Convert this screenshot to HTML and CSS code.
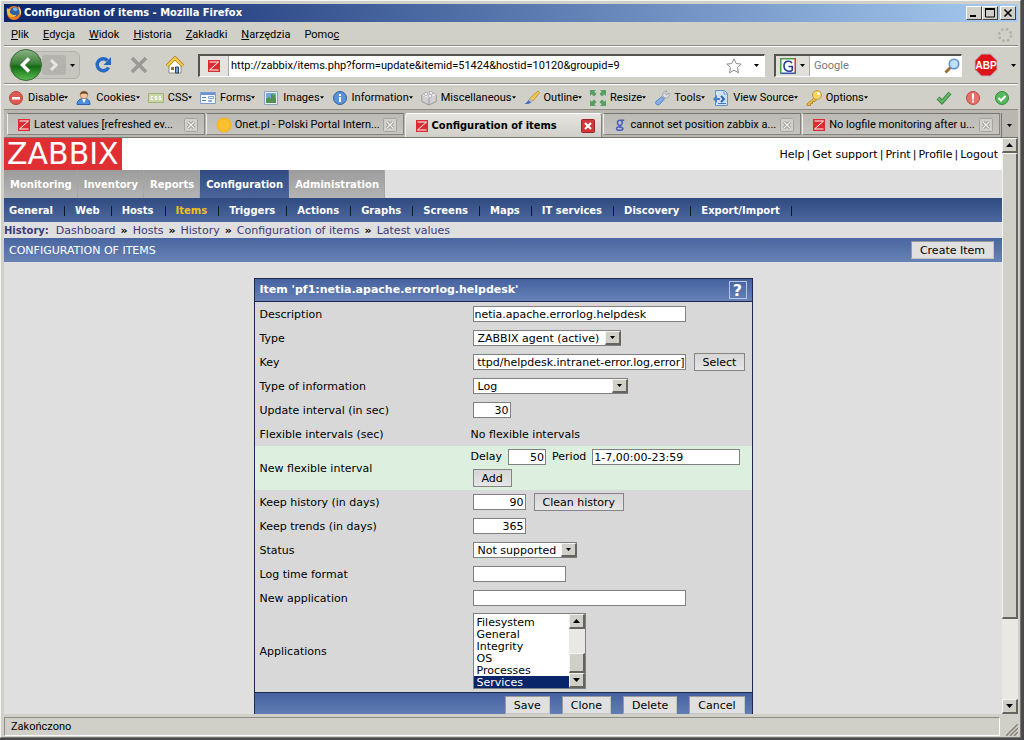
FILE: index.html
```
<!DOCTYPE html>
<html lang="pl">
<head>
<meta charset="utf-8">
<title>Configuration of items - Mozilla Firefox</title>
<link rel="stylesheet" href="styles.css">
</head>
<body>
<svg class="defs" aria-hidden="true">
  <symbol id="z" viewBox="0 0 12 12"><rect width="12" height="12" fill="#dc2b31"/><path d="M1.5 2h9L1.5 10h9" fill="none" stroke="#fff" stroke-width="1"/></symbol>
  <symbol id="x" viewBox="0 0 14 14"><rect x=".5" y=".5" width="13" height="13" rx="1" fill="#d2d0ca" stroke="#a5a39d"/><path d="M4 4l6 6M10 4l-6 6" stroke="#908e88" stroke-width="3"/><path d="M4 4l6 6M10 4l-6 6" stroke="#f4f4f2" stroke-width="1.4"/></symbol>
  <symbol id="down" viewBox="0 0 7 4"><path d="M0 0h7L3.500 4z"/></symbol>
  <symbol id="up" viewBox="0 0 7 4"><path d="M0 4h7L3.500 0z"/></symbol>
</svg>
<div class="desktop">
<div class="window">
  <header class="titlebar">
    <svg class="i16" viewBox="0 0 16 16"><circle cx="8" cy="8" r="7" fill="#ee7a1c"/><circle cx="8.500" cy="7" r="4.800" fill="#2c5fb0"/><path d="M7 3c2-1 4 0 5 2-1 0-2 1-3 1s-2-1-2-3z" fill="#7fb6e8"/><path d="M1 3c1 1 2 1 4 1L3.500 6.500c1 3 4 4.500 7 3C9 13 4 13 2 10 .8 8 .5 5 1 3z" fill="#f9b83a"/><path d="M12 1c3 2 4 6 2.500 9.500C14 7 13 4 12 1z" fill="#ffd24a"/></svg>
    <h1>Configuration of items - Mozilla Firefox</h1>
    <div class="winbtns">
      <button aria-label="Minimize"><svg viewBox="0 0 12 10"><path d="M2 7h6v2H2z"/></svg></button>
      <button aria-label="Maximize"><svg viewBox="0 0 12 10"><path d="M1.500 1.500h9v7.500h-9zM1 1.500h10" fill="none" stroke="#000"/><path d="M1 0h10v2H1z"/></svg></button>
      <button class="close" aria-label="Close"><svg viewBox="0 0 12 10"><path d="M2.500 1.500l7 7M9.500 1.500l-7 7" stroke="#000" stroke-width="1.600"/></svg></button>
    </div>
  </header>
  <nav class="menubar">
    <button><u>P</u>lik</button><button><u>E</u>dycja</button><button><u>W</u>idok</button><button><u>H</u>istoria</button><button><u>Z</u>akładki</button><button><u>N</u>arzędzia</button><button>Pomo<u>c</u></button>
    <svg class="throbber" viewBox="0 0 16 16"><circle cx="8" cy="8" r="6" fill="none" stroke="#b4b2ab" stroke-width="2.500" stroke-dasharray="2.600 2.110"/></svg>
  </nav>
  <div class="navbar">
    <div class="backfwd">
      <button class="back" aria-label="Back"><svg viewBox="0 0 32 32"><defs><linearGradient id="g" x2="0" y2="1"><stop stop-color="#8cb487"/><stop offset=".45" stop-color="#3c8037"/><stop offset=".55" stop-color="#146c14"/><stop offset="1" stop-color="#5bbd50"/></linearGradient></defs><circle cx="16" cy="16" r="15.500" fill="url(#g)" stroke="#3b6b3a"/><path d="M19 9.500L12.500 16l6.500 6.500" fill="none" stroke="#fff" stroke-width="3.500"/></svg></button>
      <button class="fwd" aria-label="Forward"><svg viewBox="0 0 24 20"><path d="M9 5l5 5-5 5" fill="none" stroke="#e6e6e2" stroke-width="3"/></svg></button>
      <button aria-label="Recent pages"><svg class="arr s"><use href="#down"/></svg></button>
    </div>
    <button aria-label="Reload"><svg class="i18" viewBox="0 0 18 18"><path d="M13.500 4.500A6 6 0 1 0 14.500 11.500" fill="none" stroke="#2467c4" stroke-width="3.400"/><path d="M17 1v8H9.500z" fill="#2467c4"/></svg></button>
    <button aria-label="Stop"><svg class="i18" viewBox="0 0 18 18"><path d="M2 2l14 14M16 2L2 16" stroke="#9a9993" stroke-width="3.600"/></svg></button>
    <button aria-label="Home"><svg class="i18" viewBox="0 0 18 18"><path d="M3 8v9h12V8L9 3z" fill="#fff" stroke="#8b8b8b"/><path d="M1 10L9 2l8 8" fill="none" stroke="#a87a12" stroke-width="3.400"/><path d="M1 10L9 2l8 8" fill="none" stroke="#f7cd4b" stroke-width="2.200"/><path d="M9.500 11h3v6h-3z" fill="#6fa0d8" stroke="#345"/><path d="M5 11h3v3H5z" fill="#9c6a3c"/></svg></button>
    <div class="urlbox">
      <span class="favbox"><svg class="i12"><use href="#z"/></svg></span>
      <input aria-label="Address" value="http://zabbix/items.php?form=update&amp;itemid=51424&amp;hostid=10120&amp;groupid=9">
      <svg class="i16" viewBox="0 0 16 16"><path d="M8 .8l2.200 4.700 5 .6-3.700 3.500 1 5.200L8 12.200l-4.500 2.600 1-5.200L.8 6.100l5-.6z" fill="#fff" stroke="#8a8a8a"/></svg>
      <button aria-label="History list"><svg class="arr s"><use href="#down"/></svg></button>
    </div>
    <div class="search">
      <button class="engine" aria-label="Search engine"><svg class="i16" viewBox="0 0 16 16"><path fill="#fff" d="M0 0h16v16H0z"/><path d="M.75 16V.75H15" fill="none" stroke="#4b9b4b" stroke-width="1.500"/><path d="M15.250 0v16" stroke="#d4343a" stroke-width="1.500"/><path d="M1 15.250h14" stroke="#3358b4" stroke-width="1.500"/><path d="M12 5C10.500 2.500 4 2 4 8s7 6 8.300 4V8.500H8.500" fill="none" stroke="#203f93" stroke-width="1.600"/></svg><svg class="arr s"><use href="#down"/></svg></button>
      <input aria-label="Search" placeholder="Google">
      <svg class="i16" viewBox="0 0 16 16"><path d="M1.500 14.500l5-5" stroke="#a36c35" stroke-width="3"/><circle cx="10" cy="6" r="4.700" fill="#bfe0fa" stroke="#5b93cf" stroke-width="1.600"/></svg>
    </div>
    <button class="abp" aria-label="Adblock Plus"><svg viewBox="0 0 24 24"><path d="M7.500 1h9L23 7.500v9L16.500 23h-9L1 16.500v-9z" fill="#e0131c" stroke="#b9b9b9"/><text x="12" y="16" text-anchor="middle">ABP</text></svg></button>
    <button class="more" aria-label="More"><svg class="arr s"><use href="#down"/></svg></button>
  </div>
  <div class="devbar">
    <button><svg class="i16" viewBox="0 0 16 16"><circle cx="8" cy="8" r="6.500" fill="#dd5a52" stroke="#b9403b"/><path d="M4 7h8v2.500H4z" fill="#fff"/></svg>Disable<svg class="arr t"><use href="#down"/></svg></button>
    <button><svg class="i16" viewBox="0 0 16 16"><path d="M1 14.500c0-4 3-6 7-6s6 2 6 6z" fill="#4c8fe0" stroke="#2b62ad"/><path d="M6 9l2 4 2-4z" fill="#fff"/><circle cx="8" cy="5" r="3.800" fill="#f2c49b" stroke="#9b6a3c" stroke-width=".6"/><path d="M4 5C4 0 12 0 12 5c-2-2-6-2-8 0z" fill="#6d4526"/></svg>Cookies<svg class="arr t"><use href="#down"/></svg></button>
    <button><svg class="i16" viewBox="0 0 16 16"><path d="M.5 3.500h15v9H.5z" fill="#c9d6a8" stroke="#a4b37c"/><path d="M5 6.500H3v3h2M9 6.500H7V8h2v1.500H7M13 6.500h-2V8h2v1.500h-2" fill="none" stroke="#fff"/></svg>CSS<svg class="arr t"><use href="#down"/></svg></button>
    <button><svg class="i16" viewBox="0 0 16 16"><path d="M.5 2.500h15v11H.5z" fill="#f7faff" stroke="#7c9cc9"/><path d="M1 3h14v2H1z" fill="#6793d6"/><path d="M2 7.500h4M2 10.500h4" stroke="#5579b3"/><path d="M8.500 6.500h5v2h-5zM8.500 10.500h3v1h-3z" fill="none" stroke="#88a6d1"/></svg>Forms<svg class="arr t"><use href="#down"/></svg></button>
    <button><svg class="i16" viewBox="0 0 16 16"><path d="M1.500 1.500h13v13h-13z" fill="#e8f0f8" stroke="#8da3bd"/><path d="M3 3h10v10H3z" fill="#74a8dd"/><path d="M3 13V9l3-2 2 2V4l4 1 1 5v3z" fill="#4b9350"/></svg>Images<svg class="arr t"><use href="#down"/></svg></button>
    <button><svg class="i16" viewBox="0 0 16 16"><circle cx="8" cy="8" r="6.500" fill="#5b92d6" stroke="#2f62a6"/><path d="M7 7h2v5H7zM7 4h2v2H7z" fill="#fff"/></svg>Information<svg class="arr t"><use href="#down"/></svg></button>
    <button><svg class="i16" viewBox="0 0 16 16"><path d="M.8 5L8 2l7.200 3v6.500L8 15 .8 11.500z" fill="#d0d0d2" stroke="#9a9a9c"/><path d="M1 5l7 3 7-3-7-3z" fill="#f2f2f2"/><path d="M8 8v7" stroke="#9a9a9c"/><ellipse cx="5" cy="4" rx="2" ry="1.400" fill="#fff" stroke="#aaa"/><ellipse cx="10" cy="3" rx="2" ry="1.400" fill="#fff" stroke="#aaa"/><ellipse cx="9" cy="6" rx="2" ry="1.400" fill="#fff" stroke="#aaa"/></svg>Miscellaneous<svg class="arr t"><use href="#down"/></svg></button>
    <button><svg class="i16" viewBox="0 0 16 16"><path d="M14 1l1.500 1.500L9 11 5.500 8.500z" fill="#f2c94e" stroke="#ac8125" stroke-width=".7"/><path d="M6 8l3 3-2 2-3-3z" fill="#b9b9bd"/><path d="M4.500 10l2.500 2.500C5 14.500 2.500 14 0 14c2-.5 3-2 4.500-4z" fill="#446fba"/></svg>Outline<svg class="arr t"><use href="#down"/></svg></button>
    <button><svg class="i16" viewBox="0 0 16 16"><path d="M0 0h6L4.300 1.700 6.500 4 4 6.500 1.700 4.300 0 6zM16 0h-6l1.700 1.700L9.500 4 12 6.500l2.300-2.200L16 6zM0 16h6l-1.700-1.700L6.500 12 4 9.500l-2.300 2.200L0 10zM16 16h-6l1.700-1.700L9.500 12 12 9.500l2.300 2.200L16 10z" fill="#579e5f"/></svg>Resize<svg class="arr t"><use href="#down"/></svg></button>
    <button><svg class="i16" viewBox="0 0 16 16"><path d="M9 6c-1-3 1-5 4-5l-2 2.500 1.500 1.500L15 3c1 3-1 5.500-4 5z" fill="#dcdfe3" stroke="#8b929b" stroke-width=".7"/><path d="M8 6.500l2.500 2.500-5 5.500c-2 1.500-5-1-3.500-3z" fill="#83aee8" stroke="#4a77b7" stroke-width=".8"/></svg>Tools<svg class="arr t"><use href="#down"/></svg></button>
    <button><svg class="i16" viewBox="0 0 16 16"><path d="M2.500.5h9l3 3v12h-12z" fill="#cfe2fa" stroke="#5f91d3"/><path d="M11 1v3h3" fill="#fff" stroke="#5f91d3"/><path d="M0 9l4-4v3h3v2H4v3z" fill="#4780cd"/><path d="M8 6l3 3-3 3" fill="none" stroke="#2f67b6" stroke-width="2"/><path d="M5 13.500h8" stroke="#3f78c5"/></svg>View Source<svg class="arr t"><use href="#down"/></svg></button>
    <button><svg class="i16" viewBox="0 0 16 16"><path d="M8 8l-7 6v1.500h3.500v-2h2v-2H9l1.500-2z" fill="#edbd41" stroke="#ad7e1f" stroke-width=".8"/><circle cx="11" cy="5" r="4.500" fill="#f7d467" stroke="#b98a25" stroke-width=".8"/><circle cx="12.500" cy="3.500" r="1.300" fill="#fff"/></svg>Options<svg class="arr t"><use href="#down"/></svg></button>
    <span class="status-icons">
      <svg class="i16" viewBox="0 0 16 16"><path d="M2 8l4 4 8-9" fill="none" stroke="#37873f" stroke-width="4"/><path d="M2 8l4 4 8-9" fill="none" stroke="#67b56b" stroke-width="2.200"/></svg>
      <svg class="i16" viewBox="0 0 16 16"><circle cx="8" cy="8" r="6.500" fill="#e4716b" stroke="#c04640"/><path d="M7 3.500h2v6H7zM7 10.500h2v2H7z" fill="#fff"/></svg>
      <svg class="i16" viewBox="0 0 16 16"><circle cx="8" cy="8" r="6.500" fill="#58b65f" stroke="#328c3a"/><path d="M4.500 8l2.500 2.500 4.500-4.500" fill="none" stroke="#fff" stroke-width="2"/></svg>
    </span>
  </div>
  <div class="tabs">
    <div class="tab"><svg class="i12"><use href="#z"/></svg><span>Latest values [refreshed ev...</span><button aria-label="Close tab"><svg class="i14"><use href="#x"/></svg></button></div>
    <div class="tab"><svg class="i16" viewBox="0 0 16 16"><circle cx="8" cy="8" r="7.500" fill="#f5b523"/><circle cx="8" cy="8" r="6" fill="#fbc02d"/></svg><span>Onet.pl - Polski Portal Intern...</span><button aria-label="Close tab"><svg class="i14"><use href="#x"/></svg></button></div>
    <div class="tab active"><svg class="i12"><use href="#z"/></svg><span>Configuration of items</span><button aria-label="Close tab"><svg class="i14" viewBox="0 0 14 14"><rect x=".5" y=".5" width="13" height="13" rx="1" fill="#d1383c" stroke="#9b2226"/><path d="M4 4l6 6M10 4l-6 6" stroke="#fff" stroke-width="2"/></svg></button></div>
    <div class="tab"><svg class="i12" viewBox="0 0 12 14"><path d="M11 1.500H7.500C10 5 8 7.500 5.500 7.500S1.500 2 5.500 1.500h3M5.500 8c0 2 4 1 4 3.300S2 14 2 11.300 6 9.500 6.500 9.500" fill="none" stroke="#4a5fc0" stroke-width="1.800"/></svg><span>cannot set position zabbix a...</span><button aria-label="Close tab"><svg class="i14"><use href="#x"/></svg></button></div>
    <div class="tab"><svg class="i12"><use href="#z"/></svg><span>No logfile monitoring after u...</span><button aria-label="Close tab"><svg class="i14"><use href="#x"/></svg></button></div>
    <button class="alltabs" aria-label="All tabs"><svg class="arr s"><use href="#down"/></svg></button>
  </div>

  <div class="viewport">
    <main class="page">
      <div class="brand"><span class="logo">ZABBIX</span>
        <p class="toplinks"><a href="#">Help</a>|<a href="#">Get support</a>|<a href="#">Print</a>|<a href="#">Profile</a>|<a href="#">Logout</a></p></div>
      <nav class="main"><a href="#">Monitoring</a><a href="#">Inventory</a><a href="#">Reports</a><a href="#" class="on">Configuration</a><a href="#">Administration</a></nav>
      <nav class="sub"><a href="#">General</a><a href="#">Web</a><a href="#">Hosts</a><a href="#" class="on">Items</a><a href="#">Triggers</a><a href="#">Actions</a><a href="#">Graphs</a><a href="#">Screens</a><a href="#">Maps</a><a href="#">IT services</a><a href="#">Discovery</a><a href="#">Export/Import</a></nav>
      <p class="history"><b>History:</b><a href="#">Dashboard</a><i>»</i><a href="#">Hosts</a><i>»</i><a href="#">History</a><i>»</i><a href="#">Configuration of items</a><i>»</i><a href="#">Latest values</a></p>
      <div class="heading"><h2>CONFIGURATION OF ITEMS</h2><button class="btn">Create Item</button></div>
      <form class="item">
        <div class="formtitle"><h3>Item 'pf1:netia.apache.errorlog.helpdesk'</h3><a href="#" class="help">?</a></div>
        <div class="row"><label for="desc">Description</label><div><input id="desc" class="wide" value="netia.apache.errorlog.helpdesk"></div></div>
        <div class="row"><label for="type">Type</label><div><span class="sel"><select id="type"><option>ZABBIX agent (active)</option></select><span class="drop"><svg class="arr s"><use href="#down"/></svg></span></span></div></div>
        <div class="row"><label for="key">Key</label><div><input id="key" class="wide key" value="ttpd/helpdesk.intranet-error.log,error]"><button type="button" class="btn">Select</button></div></div>
        <div class="row"><label for="info">Type of information</label><div><span class="sel log"><select id="info"><option>Log</option></select><span class="drop"><svg class="arr s"><use href="#down"/></svg></span></span></div></div>
        <div class="row"><label for="upd">Update interval (in sec)</label><div><input id="upd" class="num" value="30"></div></div>
        <div class="row"><span>Flexible intervals (sec)</span><div class="plain">No flexible intervals</div></div>
        <div class="row green"><span>New flexible interval</span><div class="stack"><div class="line"><label for="delay">Delay</label><input id="delay" class="num" value="50"><label for="period">Period</label><input id="period" class="period" value="1-7,00:00-23:59"></div><button type="button" class="btn">Add</button></div></div>
        <div class="row"><label for="hist">Keep history (in days)</label><div><input id="hist" class="num days" value="90"><button type="button" class="btn">Clean history</button></div></div>
        <div class="row"><label for="trends">Keep trends (in days)</label><div><input id="trends" class="num days" value="365"></div></div>
        <div class="row"><label for="status">Status</label><div><span class="sel stat"><select id="status"><option>Not supported</option></select><span class="drop"><svg class="arr s"><use href="#down"/></svg></span></span></div></div>
        <div class="row"><label for="fmt">Log time format</label><div><input id="fmt" class="fmt"></div></div>
        <div class="row"><label for="newapp">New application</label><div><input id="newapp" class="wide"></div></div>
        <div class="row apps"><label for="apps">Applications</label><div><span class="listbox"><select id="apps" multiple size="6"><option>Filesystem</option><option>General</option><option>Integrity</option><option>OS</option><option>Processes</option><option class="picked">Services</option></select><span class="bar"><span class="cap"><svg class="arr"><use href="#up"/></svg></span><span class="thumb"></span><span class="cap"><svg class="arr"><use href="#down"/></svg></span></span></span></div></div>
        <div class="actions"><button type="button" class="btn">Save</button><button type="button" class="btn">Clone</button><button type="button" class="btn">Delete</button><button type="button" class="btn">Cancel</button></div>
      </form>
    </main>
    <div class="bar pagebar"><span class="cap"><svg class="arr"><use href="#up"/></svg></span><span class="thumb"></span><span class="track"></span><span class="cap"><svg class="arr"><use href="#down"/></svg></span></div>
  </div>
  <footer class="statusbar"><span>Zakończono</span><svg class="grip" viewBox="0 0 12 12"><path d="M0 12L12 0M4 12l8-8M8 12l4-4" stroke="#85837c" stroke-width="1.500"/></svg></footer>
</div>
</div>
</body>
</html>
```
FILE: styles.css
```
* { box-sizing: border-box; }
body { margin: 0; background: #4a4a4e; font: 11px/14px Roboto, sans-serif; color: #000; }
h1, h2, h3, p { margin: 0; }
button { font: inherit; color: inherit; background: none; border: 0; padding: 0; display: flex; align-items: center; flex: none; }
input, select { font: inherit; color: #000; border: 0; outline: 0; padding: 0; margin: 0; min-width: 0; border-radius: 0; }
a { text-decoration: none; color: inherit; }
svg { flex: none; display: block; }
.defs { display: none; }
.i12 { width: 12px; height: 12px; }
.i14 { width: 14px; height: 14px; }
.i16 { width: 16px; height: 16px; }
.i18 { width: 18px; height: 18px; }
.arr { width: 7px; height: 4px; }
.arr.s { width: 5px; height: 3px; }
.arr.t { width: 4px; height: 3px; margin-bottom: 1px; }

.desktop { padding-right: 3px; padding-bottom: 2px; height: 100vh; }
.window { height: 100%; display: flex; flex-direction: column; background: #d0cfc8; border: 1px solid #f4f4f0; border-right-color: #77756f; border-bottom-color: #77756f; padding: 3px 2px 1px 3px; }

.titlebar { display: flex; align-items: center; gap: 2px; height: 18px; flex: none; padding: 0 2px; background: linear-gradient(90deg, #0a246a, #a6caf0); color: #fff; }
.titlebar h1 { font: bold 11px/16px "DejaVu Sans Condensed", sans-serif; flex: 1; }
.winbtns { display: flex; }
.winbtns button { width: 16px; height: 14px; justify-content: center; background: #d0cfc8; border: 1px solid #fff; border-right-color: #404040; border-bottom-color: #404040; }
.winbtns svg { width: 12px; height: 10px; }
.winbtns .close { margin-left: 2px; }

.menubar { display: flex; align-items: center; gap: 14px; height: 24px; flex: none; padding: 3px 5px 0 7px; border-bottom: 1px solid #8d8b84; }
.throbber { width: 16px; height: 16px; margin-left: auto; }

.navbar { display: flex; align-items: center; gap: 18px; height: 38px; flex: none; border-top: 1px solid #fff; border-bottom: 1px solid #8d8b84; padding: 0 2px 0 5px; }
.backfwd { display: flex; align-items: center; height: 28px; gap: 4px; border-radius: 14px 6px 6px 14px; border: 1px solid #b2b0a9; background: #c6c5be; padding-right: 4px; margin-right: -4px; }
.back svg { width: 32px; height: 32px; }
.fwd { background: #b4b3ad; border-radius: 3px; margin-left: -4px; }
.fwd svg { width: 24px; height: 20px; }
.urlbox, .search { display: flex; align-items: center; height: 23px; background: #fff; border: 1px solid #55534e; border-width: 2px 1px 1px 2px; border-right-color: #fff; border-bottom-color: #fff; }
.urlbox { flex: 1; gap: 7px; padding-right: 1px; margin-left: -4px; }
.urlbox input { flex: 1; align-self: stretch; padding-top: 1px; }
.urlbox button { width: 14px; justify-content: center; }
.favbox { align-self: stretch; width: 29px; display: flex; align-items: center; justify-content: center; background: #e4e3df; border-right: 1px solid #aaa; margin-right: -5px; }
.search { width: 188px; margin-left: -9px; padding-right: 1px; }
.search input { flex: 1; align-self: stretch; padding: 1px 0 0 4px; }
.search input::placeholder { color: #777; opacity: 1; }
.engine { align-self: stretch; gap: 4px; padding: 0 4px; background: #e0dfda; border-right: 1px solid #aaa; }
.abp { margin-left: -6px; }
.abp svg { width: 24px; height: 24px; }
.abp text { font: bold 10px "Liberation Sans", sans-serif; fill: #fff; }
.more { margin-left: -5px; }

.devbar { display: flex; align-items: center; gap: 8px; height: 26px; flex: none; border-top: 1px solid #fff; border-bottom: 1px solid #8d8b84; padding: 1px 8px 0 4px; white-space: nowrap; }
.devbar button .i16 { margin-right: 4px; }
.status-icons { margin-left: auto; display: flex; gap: 13px; }

.tabs { display: flex; gap: 1px; height: 28px; flex: none; padding: 3px 0 0 3px; background: #b9b7b0; border-bottom: 1px solid #77756f; white-space: nowrap; }
.tab { flex: 1; min-width: 0; display: flex; align-items: center; gap: 3px; padding: 2px 6px 0 9px; background: linear-gradient(#bdbbb5, #c6c4be); border: 1px solid #86847e; border-top-color: #77756f; border-left-color: #eee; margin-bottom: 2px; }
.tab span { flex: 1; }
.tab .i12 { margin: 0 1px; }
.tab.active { background: linear-gradient(#e6e5e1, #d0cfc8); margin-bottom: 0; border-bottom: 0; border-top-color: #fff; border-radius: 3px 3px 0 0; font-family: "DejaVu Sans Condensed", sans-serif; font-weight: bold; padding-bottom: 2px; }
.alltabs { width: 17px; justify-content: center; border-left: 1px solid #77756f; }

.viewport { flex: 1; min-height: 0; display: flex; }
.page { flex: 1; overflow: hidden; background: #dfdfdf; font: 11px/14px "DejaVu Sans", sans-serif; }
.bar { display: flex; flex-direction: column; width: 16px; background: #e9e8e4; }
.cap, .thumb, .drop { background: #d0cfc8; border: 1px solid #f4f4f0; border-right: 2px solid #66645f; border-bottom: 2px solid #66645f; }
.cap, .drop { height: 15px; display: flex; align-items: center; justify-content: center; }
.thumb { flex: 1; }
.pagebar .thumb { flex: 463; }
.pagebar .track { flex: 80; }

.brand { display: flex; justify-content: space-between; align-items: center; height: 32px; background: #fff; padding-right: 4px; }
.logo { height: 32px; background: #e02f33; color: #fff; font-size: 30px; line-height: 32px; padding: 0 3px; }
.toplinks { display: flex; gap: 2px; padding-top: 2px; }
nav.main { display: flex; font-weight: bold; font-size: 10px; color: #fff; }
nav.main a { height: 28px; line-height: 29px; padding: 0 5px 0 6px; background: linear-gradient(#9c9c9c, #b4b4b4); border-right: 1px solid #a5a5a5; }
nav.main .on { background: linear-gradient(#304c80, #4b659a); border-color: #4b659a; }
nav.sub { display: flex; align-items: center; height: 24px; background: linear-gradient(#2f4b80, #4d689e); color: #fff; font-weight: bold; font-size: 10px; white-space: nowrap; padding-top: 1px; }
nav.sub a { height: 10px; line-height: 10px; border-right: 1px solid #10182c; padding: 0 11px 0 10px; }
nav.sub a:first-child { padding-left: 5px; }
nav.sub .on { color: #f0c020; }
.history { display: flex; gap: 5px; height: 16px; line-height: 17px; color: #3d3a7a; }
.history b { font-size: 10px; margin-right: 2px; }
.history i { font-style: normal; font-weight: bold; color: #000; }
.heading { display: flex; justify-content: space-between; align-items: center; height: 24px; background: linear-gradient(#4a66a0, #6782b4); padding: 0 8px 0 5px; color: #fff; }
.heading h2 { font: inherit; padding-top: 2px; }
.btn { color: #000; height: 18px; background: linear-gradient(#d6d6d6, #e6e6e6); border: 1px solid #858585; padding: 2px 8px 0; }
.heading .btn, .actions .btn { background: #e0e0e0; border-color: #999 #c4c4c4 #c4c4c4 #999; }

.item { width: 499px; margin: 16px auto 0; background: #d8d8d8; border: 1px solid #1c2850; }
.formtitle { display: flex; justify-content: space-between; align-items: center; height: 23px; padding: 0 5px; background: linear-gradient(#4562a0, #6682b8); border-bottom: 1px solid #1c2850; color: #fff; }
.formtitle h3 { font: bold 11px/14px "DejaVu Sans", sans-serif; }
.help { width: 18px; height: 18px; border: 1px solid #b8c6e2; font: bold 16px/17px "DejaVu Sans", sans-serif; text-align: center; }
.row { display: flex; align-items: center; min-height: 24px; padding-left: 5px; }
.row > :first-child { width: 213px; padding-top: 2px; }
.row > div { display: flex; align-items: center; gap: 8px; }
.row > .plain { margin-left: -2px; padding-top: 2px; }
.row input { height: 16px; border: 1px solid #808080; padding: 0 1px; background: #fff; }
.row .wide { width: 213px; }
.row .key { text-align: right; padding: 0; }
.row .num { width: 38px; text-align: right; }
.row .days { width: 53px; }
.row .fmt { width: 93px; }
.row .period { width: 148px; }
.green { min-height: 44px; background: #ddefdf; }
.green > .stack { flex-direction: column; align-items: flex-start; gap: 4px; }
.line { display: flex; align-items: center; gap: 6px; margin-left: -2px; }
.sel { display: grid; width: 148px; height: 16px; background: #fff; border: 1px solid #808080; border-right: 0; }
.sel.log { width: 155px; }
.sel.stat { width: 104px; }
.sel select { grid-area: 1 / 1; appearance: none; background: none; padding: 1px 0 0 4px; }
.sel .drop { grid-area: 1 / 1; justify-self: end; width: 16px; height: 14px; pointer-events: none; }
.row.apps { min-height: 82px; }
.listbox { display: flex; width: 113px; height: 76px; border: 1px solid #808080; background: #fff; }
.listbox select { flex: 1; overflow: hidden; padding-top: 2px; height: 74px; background: #fff; }
.listbox option { padding: 0 3px; min-height: 12px; line-height: 12px; height: 12px; }
.listbox .picked { background: #0a246a; color: #fff; }
.listbox .thumb { flex: none; height: 20px; margin-top: auto; }
.actions { display: flex; justify-content: flex-end; gap: 12px; padding: 3px 7px; height: 26px; background: linear-gradient(#4562a0, #6682b8); border-top: 1px solid #1c2850; }

.statusbar { display: flex; align-items: flex-end; gap: 6px; height: 22px; flex: none; padding-top: 2px; }
.statusbar span { flex: 1; height: 19px; line-height: 18px; padding-left: 6px; border: 1px solid #8d8b84; border-right-color: #fff; border-bottom-color: #fff; }
.grip { width: 12px; height: 12px; }
```
